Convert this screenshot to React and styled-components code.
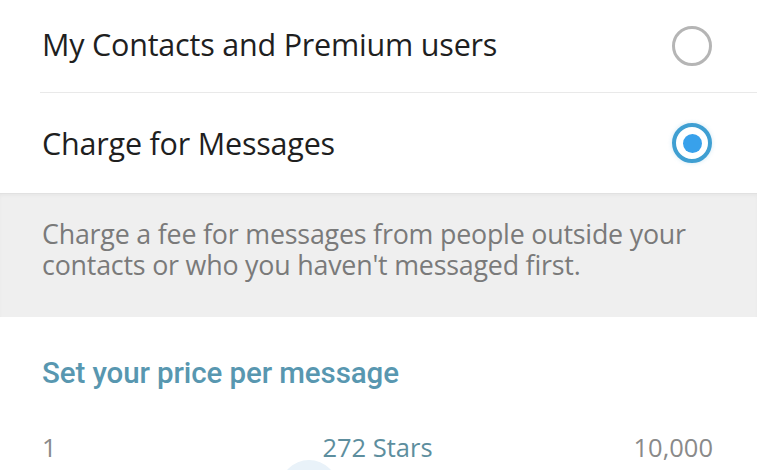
import React from "react";
import styled, { createGlobalStyle } from "styled-components";

const Global = createGlobalStyle`
  html, body { margin: 0; padding: 0; background: #ffffff; }
  body { width: 757px; height: 470px; overflow: hidden; }
  * { box-sizing: border-box; }
`;

const Page = styled.div`
  width: 757px;
  height: 470px;
  overflow: hidden;
  display: flex;
  flex-direction: column;
  background: #ffffff;
  font-family: "Open Sans", "Noto Sans", sans-serif;
`;

const OptionRow = styled.div`
  height: ${(p) => p.$h}px;
  flex-shrink: 0;
  margin-left: 40px;
  padding: 0 45px 0 2px;
  display: flex;
  align-items: center;
  justify-content: space-between;
  border-bottom: ${(p) => (p.$divider ? "1px solid #e9e9e9" : "none")};
`;

const OptionLabel = styled.span`
  font-size: 30.5px;
  color: #1f1f1f;
  letter-spacing: -0.2px;
  padding-bottom: ${(p) => p.$pb || 0}px;
`;

const Radio = styled.span`
  width: 40px;
  height: 40px;
  border-radius: 50%;
  border: ${(p) => (p.$checked ? "4.5px solid #3f9fd2" : "3.5px solid #b5b5b5")};
  display: flex;
  align-items: center;
  justify-content: center;
  box-shadow: ${(p) => (p.$checked ? "0 0 4px rgba(63,159,210,0.25)" : "none")};
`;

const RadioDot = styled.span`
  width: 19px;
  height: 19px;
  border-radius: 50%;
  background: #38a1eb;
`;

const InfoBox = styled.div`
  height: 124px;
  flex-shrink: 0;
  background: #efefef;
  border-top: 1px solid #e1e1e1;
  padding: 24px 40px 0 42px;
  box-shadow: inset 0 2px 3px rgba(0, 0, 0, 0.03);
`;

const InfoText = styled.p`
  margin: 0;
  font-size: 26.8px;
  line-height: 31px;
  color: #7a7a7a;
  letter-spacing: -0.2px;
`;

const PriceSection = styled.div`
  display: flex;
  flex-direction: column;
  padding: 37px 44px 0 42px;
`;

const SectionTitle = styled.h3`
  margin: 0;
  font-family: Roboto, "Noto Sans", sans-serif;
  font-weight: 500;
  font-size: 29.5px;
  line-height: 38px;
  color: #5897b0;
  letter-spacing: -0.1px;
`;

const ScaleRow = styled.div`
  margin-top: 40px;
  display: grid;
  grid-template-columns: 1fr auto 1fr;
  align-items: center;
  font-size: 25.5px;
  line-height: 30px;
`;

const ScaleValue = styled.span`
  justify-self: ${(p) => p.$align};
  color: ${(p) => (p.$accent ? "#5d8e9e" : "#8a8a8a")};
`;

const Track = styled.div`
  position: relative;
  height: 40px;
`;

const ThumbGlow = styled.span`
  position: absolute;
  left: 238px;
  top: -2px;
  width: 58px;
  height: 58px;
  border-radius: 50%;
  background: #e9f2f9;
`;

export default function App() {
  return (
    <>
      <Global />
      <Page>
        <OptionRow $h={93} $divider>
          <OptionLabel $pb={4}>My Contacts and Premium users</OptionLabel>
          <Radio />
        </OptionRow>
        <OptionRow $h={100}>
          <OptionLabel>Charge for Messages</OptionLabel>
          <Radio $checked>
            <RadioDot />
          </Radio>
        </OptionRow>
        <InfoBox>
          <InfoText>
            Charge a fee for messages from people outside your
            <br />
            contacts or who you haven't messaged first.
          </InfoText>
        </InfoBox>
        <PriceSection>
          <SectionTitle>Set your price per message</SectionTitle>
          <ScaleRow>
            <ScaleValue $align="start">1</ScaleValue>
            <ScaleValue $align="center" $accent>272 Stars</ScaleValue>
            <ScaleValue $align="end">10,000</ScaleValue>
          </ScaleRow>
          <Track>
            <ThumbGlow />
          </Track>
        </PriceSection>
      </Page>
    </>
  );
}
